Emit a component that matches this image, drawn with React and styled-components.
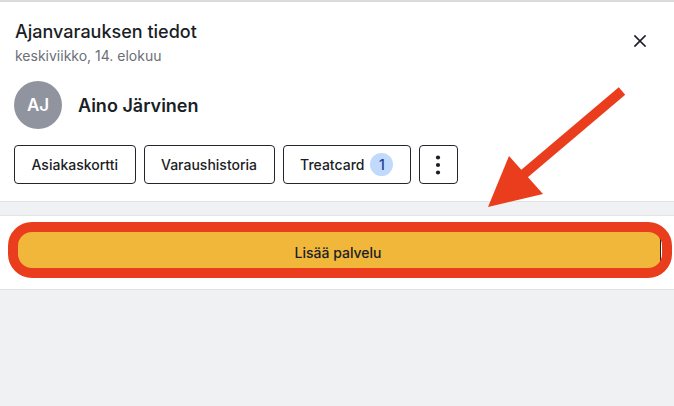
import React from "react";
import styled, { createGlobalStyle } from "styled-components";

const Global = createGlobalStyle`
  html, body { margin: 0; padding: 0; }
  body {
    background: #f0f1f3;
    font-family: Inter, "Noto Sans", "Liberation Sans", sans-serif;
    color: #1b1e25;
    -webkit-font-smoothing: antialiased;
  }
`;

const Page = styled.div`
  position: relative;
  width: 674px;
  height: 406px;
  overflow: hidden;
  background: #f0f1f3;
  border-top: 2px solid #dadbdd;
  box-sizing: border-box;
`;

const Header = styled.section`
  background: #fff;
  padding: 18px 15px 17px 14px;
  border-bottom: 1px solid #e3e4e7;
`;

const TitleRow = styled.div`
  display: flex;
  justify-content: space-between;
  align-items: flex-start;
`;

const TitleBlock = styled.div`
  display: flex;
  flex-direction: column;
  gap: 4px;
  padding-left: 1px;
`;

const Title = styled.h1`
  margin: 0;
  font-size: 18px;
  line-height: 24px;
  font-weight: 500;
`;

const Subtitle = styled.div`
  font-size: 14px;
  line-height: 16px;
  color: #6b6f78;
`;

const CloseButton = styled.button`
  border: 0;
  background: none;
  padding: 0;
  margin-top: 14px;
  margin-right: 12px;
  width: 14px;
  height: 14px;
  display: flex;
  align-items: center;
  justify-content: center;
  color: #1b1e25;
`;

const Customer = styled.div`
  display: flex;
  align-items: center;
  gap: 16px;
  margin-top: 17px;
`;

const Avatar = styled.div`
  width: 48px;
  height: 48px;
  border-radius: 50%;
  background: #8f949e;
  color: #fff;
  display: flex;
  align-items: center;
  justify-content: center;
  font-size: 17px;
  font-weight: 600;
`;

const Name = styled.div`
  font-size: 18px;
  font-weight: 600;
`;

const Actions = styled.div`
  display: flex;
  gap: 8px;
  margin-top: 16px;
`;

const Outline = styled.button`
  height: 39px;
  box-sizing: border-box;
  border: 1.5px solid #22252c;
  border-radius: 4px;
  background: #fff;
  padding: 0 ${(p) => (p.$square ? "0" : "16.5px")};
  width: ${(p) => (p.$square ? "39px" : "auto")};
  flex-shrink: 0;
  display: flex;
  align-items: center;
  justify-content: center;
  gap: 6px;
  font-family: inherit;
  font-size: 14px;
  font-weight: 500;
  color: #1b1e25;
`;

const Badge = styled.span`
  width: 23px;
  height: 23px;
  border-radius: 50%;
  background: #bfdafc;
  color: #1e3f8f;
  font-size: 14px;
  font-weight: 500;
  display: flex;
  align-items: center;
  justify-content: center;
`;

const Band = styled.div`
  height: 13px;
  background: #f0f1f3;
  border-bottom: 1px solid #e3e4e7;
`;

const ActionSection = styled.section`
  background: #fff;
  padding: 16px 13px 16px 16px;
  border-bottom: 1px solid #e1e2e5;
`;

const Primary = styled.button`
  width: 100%;
  height: 41px;
  border: 0;
  border-right: 1.5px solid #22252c;
  border-radius: 8px;
  background: #f1b73b;
  font-family: inherit;
  font-size: 14px;
  font-weight: 500;
  color: #1b1e25;
`;

const Highlight = styled.div`
  position: absolute;
  left: 8px;
  top: 220px;
  width: 664px;
  height: 56px;
  box-sizing: border-box;
  border: 10px solid #e93d1e;
  border-radius: 24px;
  pointer-events: none;
`;

const ArrowSvg = styled.svg`
  position: absolute;
  left: 0;
  top: 0;
  pointer-events: none;
`;

export default function App() {
  return (
    <>
      <Global />
      <Page>
        <Header>
          <TitleRow>
            <TitleBlock>
              <Title>Ajanvarauksen tiedot</Title>
              <Subtitle>keskiviikko, 14. elokuu</Subtitle>
            </TitleBlock>
            <CloseButton aria-label="Sulje">
              <svg width="12" height="12" viewBox="0 0 12 12">
                <path d="M1 1L11 11M11 1L1 11" stroke="currentColor" strokeWidth="1.7" strokeLinecap="square" />
              </svg>
            </CloseButton>
          </TitleRow>
          <Customer>
            <Avatar>AJ</Avatar>
            <Name>Aino Järvinen</Name>
          </Customer>
          <Actions>
            <Outline>Asiakaskortti</Outline>
            <Outline>Varaushistoria</Outline>
            <Outline>
              Treatcard <Badge>1</Badge>
            </Outline>
            <Outline $square aria-label="Lisää">
              <svg width="6" height="20" viewBox="0 0 6 20">
                <circle cx="3" cy="2.5" r="2.1" fill="#1b1e25" />
                <circle cx="3" cy="10" r="2.1" fill="#1b1e25" />
                <circle cx="3" cy="17.5" r="2.1" fill="#1b1e25" />
              </svg>
            </Outline>
          </Actions>
        </Header>
        <Band />
        <ActionSection>
          <Primary>Lisää palvelu</Primary>
        </ActionSection>
        <Highlight />
        <ArrowSvg width="674" height="406" viewBox="0 0 674 406">
          <line x1="622" y1="89" x2="524" y2="172" stroke="#e93d1e" strokeWidth="10" />
          <polygon points="488,205 509,154 543,192" fill="#e93d1e" />
        </ArrowSvg>
      </Page>
    </>
  );
}
